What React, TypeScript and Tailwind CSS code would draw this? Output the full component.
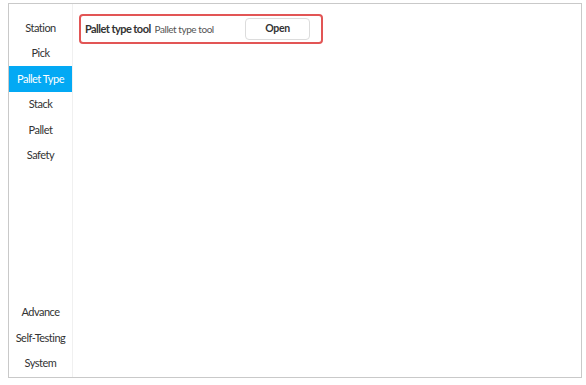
const topItems = ["Station", "Pick", "Pallet Type", "Stack", "Pallet", "Safety"];
const bottomItems = ["Advance", "Self-Testing", "System"];

function NavItem({ label, active }: { label: string; active?: boolean }) {
  return (
    <div
      className={[
        "flex h-[25.5px] items-center justify-center text-[11px] tracking-[-0.5px]",
        active ? "bg-[#03a9f4] text-white" : "text-[#333]",
      ].join(" ")}
    >
      {label}
    </div>
  );
}

export default function App() {
  return (
    <div className="h-[385px] w-[586px] bg-white pl-[8px] pt-[3px] font-['Lato','Noto_Sans',sans-serif]">
      <div className="flex h-[375px] w-[574px] border border-[#c9c9c9]">
        <nav className="flex w-[64px] flex-col justify-between border-r border-[#f0f0f0] pt-[11px] pb-px">
          <div>
            {topItems.map((item) => (
              <NavItem key={item} label={item} active={item === "Pallet Type"} />
            ))}
          </div>
          <div>
            {bottomItems.map((item) => (
              <NavItem key={item} label={item} />
            ))}
          </div>
        </nav>
        <main className="flex-1 pl-[6px] pt-[10px]">
          <div className="flex h-[30px] w-[244px] items-center rounded-[4px] border-2 border-[#e25555] pl-[4px]">
            <span className="text-[11px] font-bold tracking-[-0.55px] text-[#333]">Pallet type tool</span>
            <span className="ml-[4px] text-[10px] tracking-[-0.45px] text-[#555]">Pallet type tool</span>
            <button
              type="button"
              className="ml-auto mr-[11px] h-[22px] w-[65px] rounded-[4px] border border-[#dcdcdc] bg-white text-[10.5px] font-bold tracking-[-0.3px] text-[#333]"
            >
              Open
            </button>
          </div>
        </main>
      </div>
    </div>
  );
}
